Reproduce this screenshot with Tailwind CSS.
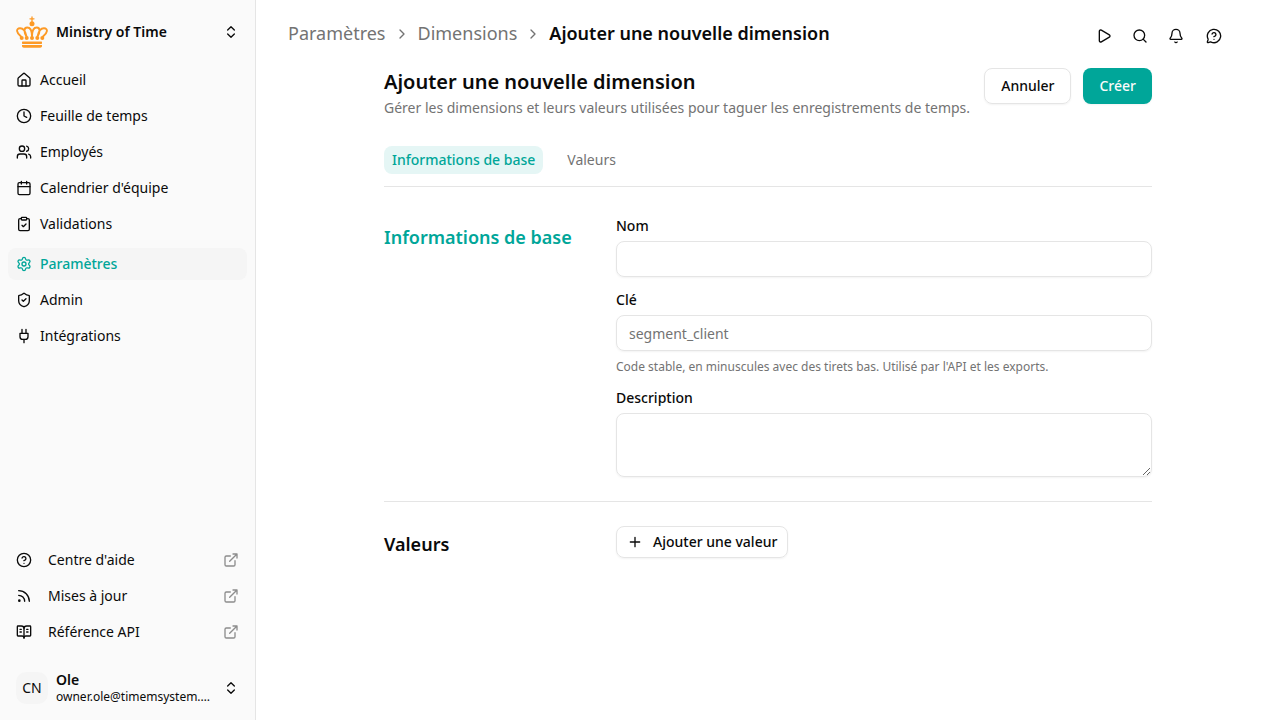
<!DOCTYPE html>
<html lang="fr">
<head>
<meta charset="utf-8">
<title>Ajouter une nouvelle dimension</title>
<script src="https://cdn.jsdelivr.net/npm/@tailwindcss/browser@4"></script>
</head>
<body class="flex h-screen overflow-hidden bg-white font-['Noto_Sans',sans-serif] text-sm text-neutral-950">
<svg class="hidden" xmlns="http://www.w3.org/2000/svg">
  <symbol id="updown" viewBox="0 0 24 24"><path d="m7 15 5 5 5-5M7 9l5-5 5 5"/></symbol>
  <symbol id="house" viewBox="0 0 24 24"><path d="M15 21v-8a1 1 0 0 0-1-1h-4a1 1 0 0 0-1 1v8"/><path d="M3 10a2 2 0 0 1 .709-1.528l7-5.999a2 2 0 0 1 2.582 0l7 5.999A2 2 0 0 1 21 10v9a2 2 0 0 1-2 2H5a2 2 0 0 1-2-2z"/></symbol>
  <symbol id="clock" viewBox="0 0 24 24"><circle cx="12" cy="12" r="10"/><path d="M12 6v6l4 2"/></symbol>
  <symbol id="users" viewBox="0 0 24 24"><path d="M16 21v-2a4 4 0 0 0-4-4H6a4 4 0 0 0-4 4v2"/><path d="M16 3.128a4 4 0 0 1 0 7.744M22 21v-2a4 4 0 0 0-3-3.87"/><circle cx="9" cy="7" r="4"/></symbol>
  <symbol id="calendar" viewBox="0 0 24 24"><path d="M8 2v4M16 2v4"/><rect width="18" height="18" x="3" y="4" rx="2"/><path d="M3 10h18"/></symbol>
  <symbol id="clipboard" viewBox="0 0 24 24"><rect width="8" height="4" x="8" y="2" rx="1"/><path d="M16 4h2a2 2 0 0 1 2 2v14a2 2 0 0 1-2 2H6a2 2 0 0 1-2-2V6a2 2 0 0 1 2-2h2"/><path d="m9 14 2 2 4-4"/></symbol>
  <symbol id="settings" viewBox="0 0 24 24"><path d="M9.671 4.136a2.34 2.34 0 0 1 4.659 0 2.34 2.34 0 0 0 3.319 1.915 2.34 2.34 0 0 1 2.33 4.033 2.34 2.34 0 0 0 0 3.831 2.34 2.34 0 0 1-2.33 4.033 2.34 2.34 0 0 0-3.319 1.915 2.34 2.34 0 0 1-4.659 0 2.34 2.34 0 0 0-3.32-1.915 2.34 2.34 0 0 1-2.33-4.033 2.34 2.34 0 0 0 0-3.831A2.34 2.34 0 0 1 6.35 6.051a2.34 2.34 0 0 0 3.319-1.915"/><circle cx="12" cy="12" r="3"/></symbol>
  <symbol id="shield" viewBox="0 0 24 24"><path d="M20 13c0 5-3.5 7.5-7.66 8.95a1 1 0 0 1-.67-.01C7.5 20.5 4 18 4 13V6a1 1 0 0 1 1-1c2 0 4.5-1.2 6.24-2.72a1.17 1.17 0 0 1 1.52 0C14.51 3.81 17 5 19 5a1 1 0 0 1 1 1z"/><path d="m9 12 2 2 4-4"/></symbol>
  <symbol id="plug" viewBox="0 0 24 24"><path d="M12 22v-5M9 8V2M15 8V2"/><path d="M18 8v5a4 4 0 0 1-4 4h-4a4 4 0 0 1-4-4V8Z"/></symbol>
  <symbol id="help" viewBox="0 0 24 24"><circle cx="12" cy="12" r="10"/><path d="M9.09 9a3 3 0 0 1 5.83 1c0 2-3 3-3 3M12 17h.01"/></symbol>
  <symbol id="rss" viewBox="0 0 24 24"><path d="M4 11a9 9 0 0 1 9 9M4 4a16 16 0 0 1 16 16"/><circle cx="5" cy="19" r="1"/></symbol>
  <symbol id="book" viewBox="0 0 24 24"><path d="M12 7v14M16 12h2M16 8h2"/><path d="M3 18a1 1 0 0 1-1-1V4a1 1 0 0 1 1-1h5a4 4 0 0 1 4 4 4 4 0 0 1 4-4h5a1 1 0 0 1 1 1v13a1 1 0 0 1-1 1h-6a3 3 0 0 0-3 3 3 3 0 0 0-3-3z"/><path d="M6 12h2M6 8h2"/></symbol>
  <symbol id="external" viewBox="0 0 24 24"><path d="M15 3h6v6M10 14 21 3M18 13v6a2 2 0 0 1-2 2H5a2 2 0 0 1-2-2V8a2 2 0 0 1 2-2h6"/></symbol>
  <symbol id="chevron" viewBox="0 0 24 24"><path d="m9 18 6-6-6-6"/></symbol>
  <symbol id="play" viewBox="0 0 24 24"><path d="M5 5a2 2 0 0 1 3.008-1.728l11.997 6.998a2 2 0 0 1 .003 3.458l-12 7A2 2 0 0 1 5 19z"/></symbol>
  <symbol id="search" viewBox="0 0 24 24"><path d="m21 21-4.34-4.34"/><circle cx="11" cy="11" r="8"/></symbol>
  <symbol id="bell" viewBox="0 0 24 24"><path d="M10.268 21a2 2 0 0 0 3.464 0"/><path d="M3.262 15.326A1 1 0 0 0 4 17h16a1 1 0 0 0 .74-1.673C19.41 13.956 18 12.499 18 8A6 6 0 0 0 6 8c0 4.499-1.411 5.956-2.738 7.326"/></symbol>
  <symbol id="bubble" viewBox="0 0 24 24"><path d="M2.992 16.342a2 2 0 0 1 .094 1.167l-1.065 3.29a1 1 0 0 0 1.236 1.168l3.413-.998a2 2 0 0 1 1.099.092 10 10 0 1 0-4.777-4.719"/><path d="M9.09 9a3 3 0 0 1 5.83 1c0 2-3 3-3 3M12 17h.01"/></symbol>
  <symbol id="plus" viewBox="0 0 24 24"><path d="M5 12h14M12 5v14"/></symbol>
</svg>

<aside class="flex w-64 shrink-0 flex-col border-r border-neutral-200 bg-neutral-50 p-2">
  <div class="flex h-12 items-center gap-2 p-2">
    <svg class="size-8" viewBox="0 0 32 32" fill="none" stroke="#fd9a26" stroke-width="1.9" stroke-linecap="round">
      <path d="M16 .9v4.500M14 2.800h4" stroke-width="1.300"/>
      <circle cx="16" cy="7.700" r="2.500" fill="#fd9a26" stroke="none"/>
      <path d="M5 20.500C.2 16.500-.2 12.600 3.900 12.300c3.500-.2 5.600 3.400 6.600 8.200M10.500 20.500C7.500 15.500 8 11.500 11.200 11.500c3.600 0 4.800 4.100 4.800 9M16 20.500c0-4.900 1.200-9 4.800-9 3.200 0 3.700 4 .7 9M21.500 20.500c1-4.800 3.100-8.400 6.600-8.200 4.100.3 3.700 4.200-1.100 8.200"/>
      <g fill="#fd9a26" stroke="none"><circle cx="5.700" cy="21.900" r="2"/><circle cx="10.700" cy="21.900" r="2"/><circle cx="16" cy="21.900" r="2"/><circle cx="21.300" cy="21.900" r="2"/><circle cx="26.300" cy="21.900" r="2"/><rect x="6" y="25.400" width="20" height="2.500" rx=".6"/><path d="M6 28.900h20V30c0 1-.8 1.700-1.800 1.700H7.800C6.800 31.700 6 31 6 30z"/></g>
    </svg>
    <span class="flex-1 font-semibold">Ministry of Time</span>
    <svg class="size-4 fill-none stroke-current stroke-2" stroke-linecap="round" stroke-linejoin="round"><use href="#updown"/></svg>
  </div>
  <nav class="mt-2 flex flex-col gap-1 [&_a]:flex [&_a]:h-8 [&_a]:items-center [&_a]:gap-2 [&_a]:rounded-lg [&_a]:px-2 [&_svg]:size-4 [&_svg]:fill-none [&_svg]:stroke-current [&_svg]:stroke-2">
    <a><svg stroke-linecap="round" stroke-linejoin="round"><use href="#house"/></svg>Accueil</a>
    <a><svg stroke-linecap="round" stroke-linejoin="round"><use href="#clock"/></svg>Feuille de temps</a>
    <a><svg stroke-linecap="round" stroke-linejoin="round"><use href="#users"/></svg>Employés</a>
    <a><svg stroke-linecap="round" stroke-linejoin="round"><use href="#calendar"/></svg>Calendrier d'équipe</a>
    <a><svg stroke-linecap="round" stroke-linejoin="round"><use href="#clipboard"/></svg>Validations</a>
    <a class="mt-1 bg-neutral-100 font-medium text-[#00a699]"><svg stroke-linecap="round" stroke-linejoin="round"><use href="#settings"/></svg>Paramètres</a>
    <a><svg stroke-linecap="round" stroke-linejoin="round"><use href="#shield"/></svg>Admin</a>
    <a><svg stroke-linecap="round" stroke-linejoin="round"><use href="#plug"/></svg>Intégrations</a>
  </nav>
  <div class="mt-auto flex flex-col gap-1 [&_a]:flex [&_a]:h-8 [&_a]:items-center [&_a]:px-2 [&_span]:ml-4 [&_span]:flex-1 [&_svg]:size-4 [&_svg]:fill-none [&_svg]:stroke-current [&_svg]:stroke-2">
    <a><svg stroke-linecap="round" stroke-linejoin="round"><use href="#help"/></svg><span>Centre d'aide</span><svg class="opacity-45" stroke-linecap="round" stroke-linejoin="round"><use href="#external"/></svg></a>
    <a><svg stroke-linecap="round" stroke-linejoin="round"><use href="#rss"/></svg><span>Mises à jour</span><svg class="opacity-45" stroke-linecap="round" stroke-linejoin="round"><use href="#external"/></svg></a>
    <a><svg stroke-linecap="round" stroke-linejoin="round"><use href="#book"/></svg><span>Référence API</span><svg class="opacity-45" stroke-linecap="round" stroke-linejoin="round"><use href="#external"/></svg></a>
  </div>
  <div class="mt-4 flex h-12 items-center gap-2 p-2">
    <div class="flex size-8 shrink-0 items-center justify-center rounded-[10px] bg-neutral-100">CN</div>
    <div class="min-w-0 flex-1">
      <div class="truncate pb-px font-semibold leading-4">Ole</div>
      <div class="truncate text-xs leading-4">owner.ole@timemsystem.com</div>
    </div>
    <svg class="ml-1 size-4 shrink-0 fill-none stroke-current stroke-2" stroke-linecap="round" stroke-linejoin="round"><use href="#updown"/></svg>
  </div>
</aside>

<main class="flex min-w-0 flex-1 flex-col">
  <header class="flex h-[68px] items-start justify-between pl-8 pr-[58px]">
    <div class="mt-5 flex items-center gap-2 text-lg leading-[27px] text-neutral-500">
      <span>Paramètres</span>
      <svg class="size-4 fill-none stroke-current stroke-2" stroke-linecap="round" stroke-linejoin="round"><use href="#chevron"/></svg>
      <span>Dimensions</span>
      <svg class="size-4 fill-none stroke-current stroke-2" stroke-linecap="round" stroke-linejoin="round"><use href="#chevron"/></svg>
      <span class="font-semibold text-neutral-950">Ajouter une nouvelle dimension</span>
    </div>
    <div class="mt-7 flex gap-5 [&_svg]:size-4 [&_svg]:fill-none [&_svg]:stroke-current [&_svg]:stroke-2">
      <svg stroke-linecap="round" stroke-linejoin="round"><use href="#play"/></svg>
      <svg stroke-linecap="round" stroke-linejoin="round"><use href="#search"/></svg>
      <svg stroke-linecap="round" stroke-linejoin="round"><use href="#bell"/></svg>
      <svg class="ml-0.5" stroke-linecap="round" stroke-linejoin="round"><use href="#bubble"/></svg>
    </div>
  </header>
  <div class="mx-auto w-3xl">
    <div class="flex items-start justify-between">
      <div>
        <h1 class="text-xl font-semibold leading-7">Ajouter une nouvelle dimension</h1>
        <p class="mt-0.5 whitespace-nowrap text-neutral-500">Gérer les dimensions et leurs valeurs utilisées pour taguer les enregistrements de temps.</p>
      </div>
      <div class="flex gap-3">
        <button class="h-9 rounded-lg border border-neutral-200 px-4 font-medium shadow-xs">Annuler</button>
        <button class="h-9 rounded-lg bg-[#00a699] px-4 font-medium text-neutral-50 shadow-xs">Créer</button>
      </div>
    </div>
    <div class="mt-7 flex gap-4 border-b border-neutral-200 pb-3 font-medium">
      <span class="rounded-lg bg-[#e5f6f5] px-2 py-1 text-[#00a699]">Informations de base</span>
      <span class="px-2 py-1 font-normal text-neutral-500">Valeurs</span>
    </div>
    <section class="flex border-b border-neutral-200 pb-6 pt-8">
      <h2 class="mt-1 w-[232px] shrink-0 text-lg font-semibold text-[#00a699]">Informations de base</h2>
      <div class="flex flex-1 flex-col">
        <label class="font-medium leading-[14px]">Nom</label>
        <input class="mt-2 h-9 rounded-lg border border-neutral-200 px-3 shadow-xs">
        <label class="mt-4 font-medium leading-[14px]">Clé</label>
        <input class="mt-2 h-9 rounded-lg border border-neutral-200 px-3 shadow-xs placeholder:text-neutral-500" placeholder="segment_client">
        <p class="mt-2 text-xs text-neutral-500">Code stable, en minuscules avec des tirets bas. Utilisé par l'API et les exports.</p>
        <label class="mt-4 font-medium leading-[14px]">Description</label>
        <textarea class="mt-2 h-16 rounded-lg border border-neutral-200 px-3 py-2 shadow-xs"></textarea>
      </div>
    </section>
    <section class="flex pt-6">
      <h2 class="mt-1 w-[232px] shrink-0 text-lg font-semibold">Valeurs</h2>
      <button class="flex h-8 items-center gap-2.5 rounded-lg border border-neutral-200 px-2.5 font-medium shadow-xs"><svg class="size-4 fill-none stroke-current stroke-2" stroke-linecap="round" stroke-linejoin="round"><use href="#plus"/></svg>Ajouter une valeur</button>
    </section>
  </div>
</main>
</body>
</html>
